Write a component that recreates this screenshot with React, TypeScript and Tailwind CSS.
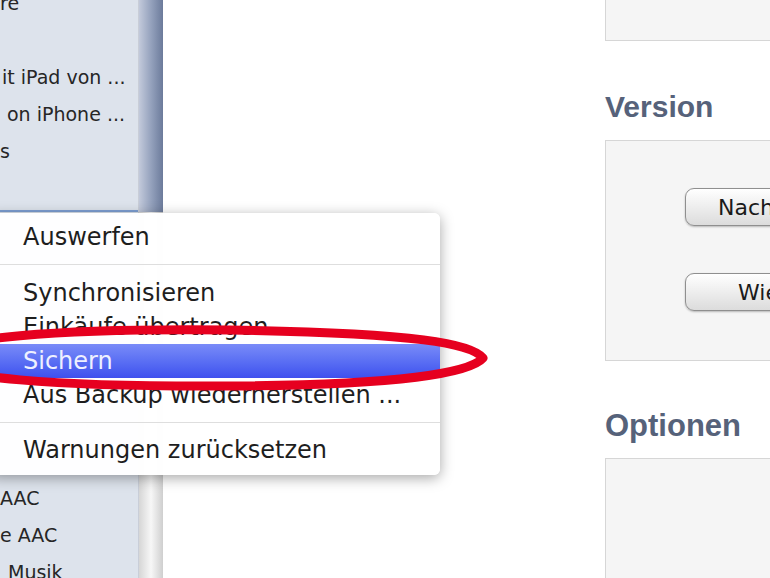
const sidebarTop = ['re', '', 'it iPad von ...', 'on iPhone ...', 's'];
const sidebarBottom = [
  { label: 'AAC', indent: 'pl-0' },
  { label: 'e AAC', indent: 'pl-0' },
  { label: 'Musik', indent: 'pl-[8px]' },
];

const menuGroups = [
  ['Auswerfen'],
  ['Synchronisieren', 'Einkäufe übertragen', 'Sichern', 'Aus Backup wiederherstellen ...'],
  ['Warnungen zurücksetzen'],
];

function Sidebar() {
  return (
    <div className="w-[138px] shrink-0 bg-[#dde3ec] text-[19px] text-[#262626] font-['DejaVu_Sans',sans-serif]">
      <div className="-mt-[15px]">
        {sidebarTop.map((t, i) => (
          <div key={i} className={`h-[37px] leading-[37px] whitespace-nowrap ${t.startsWith('on') ? 'pl-[7px]' : t.startsWith('it') ? 'pl-[2px]' : ''}`}>
            {t}
          </div>
        ))}
      </div>
      <div className="h-[40px]" />
      {/* selected device row, mostly hidden by the menu */}
      <div className="h-[270px] border-t-2 border-[#7d9fd3]" />
      {sidebarBottom.map((r) => (
        <div key={r.label} className={`h-[37px] leading-[37px] whitespace-nowrap ${r.indent}`}>
          {r.label}
        </div>
      ))}
    </div>
  );
}

function Scrollbar() {
  return (
    <div className="w-[25px] shrink-0 flex flex-col border-l border-[#c9ced8]">
      <div className="h-[212px] bg-gradient-to-r from-[#c3cadb] via-[#95a2bd] to-[#6c7b9b]" />
      <div className="flex-1 bg-gradient-to-r from-[#d6d6d6] via-[#f7f7f7] to-[#cfcfcf]" />
    </div>
  );
}

function MacButton({ label, pad }: { label: string; pad: string }) {
  return (
    <div
      className={`h-[38px] w-[220px] rounded-[9px] border border-[#8f8f8f] bg-gradient-to-b from-white to-[#dcdcdc] shadow-[0_1px_2px_rgba(0,0,0,0.25)] flex items-center ${pad} text-[22px] text-[#1a1a1a] whitespace-nowrap font-['DejaVu_Sans',sans-serif]`}
    >
      {label}
    </div>
  );
}

function Settings() {
  const heading = "h-[36px] leading-[36px] text-[30px] font-bold text-[#56627a] font-['Liberation_Sans',Arial,sans-serif]";
  return (
    <div className="flex-1 bg-white">
      <div className="ml-[442px] w-[340px]">
        <div className="h-[41px] bg-[#f5f5f5] border-l border-b border-[#d6d6d6]" />
        <div className={`mt-[48px] ${heading}`}>Version</div>
        <div className="mt-[15px] h-[221px] bg-[#f5f5f5] border border-[#d6d6d6] pt-[47px] pl-[79px]">
          <MacButton label="Nach Update suchen" pad="pl-[32px]" />
          <div className="mt-[47px]">
            <MacButton label="Wiederherstellen" pad="pl-[52px]" />
          </div>
        </div>
        <div className={`mt-[47px] ${heading} text-[31px]`}>Optionen</div>
        <div className="mt-[14px] h-[200px] bg-[#f5f5f5] border border-[#d6d6d6]" />
      </div>
    </div>
  );
}

function ContextMenu() {
  return (
    <div className="absolute left-[-10px] top-[213px] w-[450px] rounded-[6px] bg-white/[0.97] pt-[7px] pb-[8px] shadow-[0_3px_14px_rgba(0,0,0,0.35)] text-[24px] text-[#1e1e1e] font-['DejaVu_Sans',sans-serif]">
      {menuGroups.map((group, gi) => (
        <div key={gi}>
          {gi > 0 && (
            <div className={`${gi === 1 ? 'h-[22px]' : 'h-[21px]'} pt-[10px]`}>
              <div className="h-px bg-[#dedede]" />
            </div>
          )}
          {group.map((item) =>
            item === 'Sichern' ? (
              <div key={item} className="h-[34px] leading-[34px] pl-[33px] bg-gradient-to-b from-[#7a8bf8] to-[#3f4fee] text-[#eef0ff] whitespace-nowrap">
                {item}
              </div>
            ) : (
              <div key={item} className="h-[34px] leading-[34px] pl-[33px] whitespace-nowrap">
                {item}
              </div>
            )
          )}
        </div>
      ))}
    </div>
  );
}

export default function App() {
  return (
    <div className="relative w-[770px] h-[578px] overflow-hidden bg-white flex">
      <Sidebar />
      <Scrollbar />
      <Settings />
      <ContextMenu />
      {/* hand-drawn red marker around "Sichern" */}
      <svg className="absolute left-0 top-0 pointer-events-none" width="770" height="578" viewBox="0 0 770 578">
        <path
          d="M 483 358 C 472 344 420 333 230 330 C 60 328 -60 338 -70 358 C -60 378 60 387 230 386 C 400 385 470 373 483 358 Z"
          fill="none"
          stroke="#e6001f"
          strokeWidth="9"
          strokeLinejoin="round"
        />
      </svg>
    </div>
  );
}
